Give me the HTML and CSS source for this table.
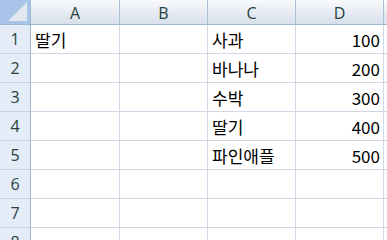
FILE: index.html
```html
<!DOCTYPE html>
<html>
<head>
<meta charset="utf-8">
<link rel="stylesheet" href="styles.css">
</head>
<body>
<div class="sheet">
  <div class="corner"><span class="tri"></span></div>
  <div class="ch">A</div><div class="ch">B</div><div class="ch">C</div><div class="ch">D</div><div class="ch"></div>

  <div class="rh">1</div><div class="c">딸기</div><div class="c"></div><div class="c">사과</div><div class="c n">100</div><div class="c"></div>
  <div class="rh">2</div><div class="c"></div><div class="c"></div><div class="c">바나나</div><div class="c n">200</div><div class="c"></div>
  <div class="rh">3</div><div class="c"></div><div class="c"></div><div class="c">수박</div><div class="c n">300</div><div class="c"></div>
  <div class="rh">4</div><div class="c"></div><div class="c"></div><div class="c">딸기</div><div class="c n">400</div><div class="c"></div>
  <div class="rh">5</div><div class="c"></div><div class="c"></div><div class="c">파인애플</div><div class="c n">500</div><div class="c"></div>
  <div class="rh">6</div><div class="c"></div><div class="c"></div><div class="c"></div><div class="c n"></div><div class="c"></div>
  <div class="rh">7</div><div class="c"></div><div class="c"></div><div class="c"></div><div class="c n"></div><div class="c"></div>
  <div class="rh">8</div><div class="c"></div><div class="c"></div><div class="c"></div><div class="c n"></div><div class="c"></div>
</div>
</body>
</html>
```
FILE: styles.css
```css
html, body {
  margin: 0;
  padding: 0;
  background: #ffffff;
  overflow: hidden;
}
.sheet {
  display: grid;
  width: 387px;
  height: 240px;
  overflow: hidden;
  grid-template-columns: 31px 89px 88px 88px 88px 88px;
  grid-template-rows: 25px repeat(8, 29px);
  font-family: "Noto Sans CJK KR", "Noto Sans", sans-serif;
}
.sheet > div {
  box-sizing: border-box;
}
.corner {
  background: #a9c4e9;
  border-right: 1px solid #9eb6ce;
  border-bottom: 1px solid #9eb6ce;
  position: relative;
}
.tri {
  position: absolute;
  right: 3px;
  bottom: 3px;
  width: 0;
  height: 0;
  border-left: 19px solid transparent;
  border-bottom: 19px solid #e2e8f0;
}
.ch {
  background: linear-gradient(#f9fafc, #e4e9f1 60%, #d8e0eb);
  border-right: 1px solid #a9bdd3;
  border-bottom: 1px solid #9eb6ce;
  display: flex;
  align-items: center;
  justify-content: center;
  font-family: "Open Sans", "Noto Sans", sans-serif;
  font-size: 16px;
  color: #27413e;
  padding-top: 1px;
}
.rh {
  background: #e4ecf7;
  border-right: 1px solid #9eb6ce;
  border-bottom: 1px solid #c5d2e3;
  display: flex;
  align-items: center;
  justify-content: center;
  font-family: "Open Sans", "Noto Sans", sans-serif;
  font-size: 16px;
  color: #27413e;
}
.c {
  border-right: 1px solid #d0d7e5;
  border-bottom: 1px solid #d0d7e5;
  display: flex;
  align-items: center;
  padding: 0 4px 0 4px;
  font-size: 17px;
  color: #000000;
  white-space: nowrap;
}
.n {
  justify-content: flex-end;
  padding-right: 3px;
}
```
